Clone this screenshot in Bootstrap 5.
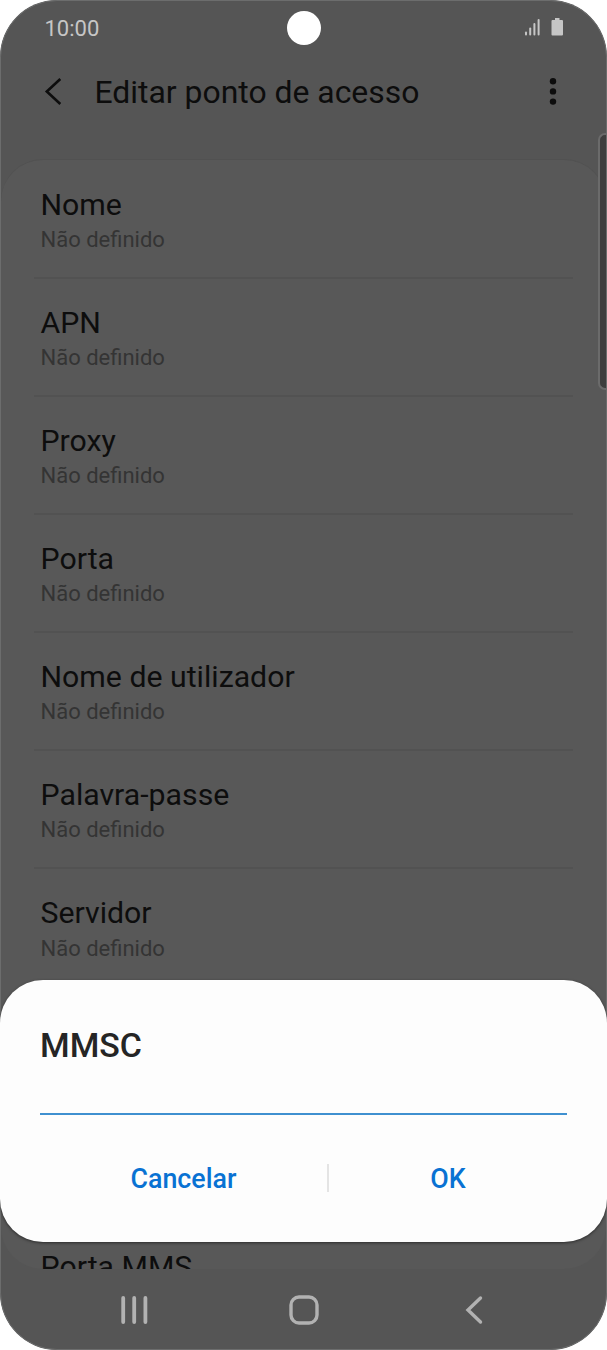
<!doctype html>
<html lang="pt">
<head>
    <meta charset="utf-8">
    <meta name="viewport" content="width=device-width, initial-scale=1">
    <title>Editar ponto de acesso</title>
    <link href="https://cdn.jsdelivr.net/npm/bootstrap@5.3.3/dist/css/bootstrap.min.css" rel="stylesheet">
    <style>
        body {
            background-color: #fff;
            font-family: Roboto, "Liberation Sans", sans-serif;
            color: #0d0d0d;
        }
        .phone {
            width: 607px;
            height: 1350px;
            padding: 1px;
            background-color: #555;
            border-radius: 57px;
        }
        /* thin bezel, drawn over the list but under the dialog */
        .bezel {
            top: 0;
            left: 0;
            width: 100%;
            height: 100%;
            border: 1px solid #6c6d6d;
            border-radius: 57px;
            pointer-events: none;
        }
        .status-bar {
            height: 54px;
            padding: 0 40px 0 43.5px;
            color: #c6c6c6;
            font-size: 22px;
            line-height: 30px;
        }
        .clock {
            padding-top: 2px;
        }
        .camera {
            top: 11px;
            left: 286.5px;
            width: 34px;
            height: 34px;
        }
        .title-bar {
            height: 104px;
            padding: 0 48px 30px 43px;
        }
        .title-bar h1 {
            font-size: 31.9px;
            line-height: 40px;
            margin-left: 31.5px;
        }
        .settings {
            height: 1110px;
            padding-top: .6px;
            background-color: #585858;
            border-top: 1px solid #515151;
            border-radius: 42px;
        }
        .setting {
            height: 118.1px;
            margin: 0 33px;
            padding: 26px 6.5px 0;
            border-bottom: 2px solid #525252;
        }
        .setting-name {
            font-size: 30.25px;
            line-height: 36px;
        }
        .setting-value {
            font-size: 22px;
            line-height: 30px;
            color: #343434;
            margin-top: 2.4px;
        }
        .setting-last {
            margin-top: 236px;
            border-bottom: 0;
        }
        .edge-handle {
            top: 133px;
            right: 0;
            width: 9px;
            height: 257px;
            background-color: #3e3e3e;
            border: 2px solid #6b6b6b;
            border-right: 0;
            border-radius: 7px 0 0 7px;
        }
        .sheet {
            top: 980px;
            left: 0;
            width: 607px;
            height: 262px;
            padding: 46px 40px 0;
            background-color: #fdfdfd;
            border-radius: 43px;
            box-shadow: 0 1px 3px rgba(0, 0, 0, .5);
        }
        .sheet h2 {
            font-size: 33.9px;
            line-height: 40px;
            font-weight: 500;
            color: #252525;
        }
        .sheet-input {
            height: 49px;
            border: 0;
            border-bottom: 2px solid #3f90d0;
            border-radius: 0;
            background: transparent;
        }
        .sheet-actions {
            height: 40px;
            margin-top: 43px;
        }
        .sheet-actions .btn {
            border: 0;
            padding: 2px 0 0;
            color: #0972d3;
            font-size: 26.8px;
            line-height: 40px;
            font-weight: 500;
        }
        .btn-cancel {
            width: 287px;
        }
        .btn-ok {
            width: 238px;
        }
        .action-rule {
            width: 2px;
            height: 28px;
            background-color: #e4e4e4;
        }
        .nav-keys {
            height: 80px;
            padding: 1px 123px 0 119px;
        }
        .key-home {
            margin-right: 6px;
        }
    </style>
</head>
<body>
    <div class="phone position-relative overflow-hidden">
        <div class="status-bar d-flex justify-content-between align-items-center">
            <span class="clock">10:00</span>
            <svg width="42" height="20" viewBox="0 0 42 20" fill="#c6c6c6">
                <rect x="1" y="13.500" width="2" height="4" rx="1"/>
                <rect x="5.200" y="9.500" width="2" height="8" rx="1"/>
                <rect x="9.400" y="5" width="2" height="12.500" rx="1"/>
                <rect x="13.600" y="1" width="2" height="16.500" rx="1"/>
                <path d="M31 0h4.500v2H38q1 0 1 1v13.500q0 1-1 1H28.500q-1 0-1-1V3q0-1 1-1H31z"/>
            </svg>
        </div>
        <div class="camera position-absolute bg-white rounded-circle"></div>

        <div class="title-bar d-flex align-items-center">
            <svg width="19" height="28" viewBox="0 0 19 28" fill="none" stroke="#0d0d0d" stroke-width="2.600">
                <path d="M16.300 1L2.800 13.500l13.500 12.500"/>
            </svg>
            <h1 class="fw-normal mb-0">Editar ponto de acesso</h1>
            <svg class="ms-auto" width="10" height="28" viewBox="0 0 10 28" fill="#0d0d0d">
                <circle cx="5" cy="3.300" r="3.200"/>
                <circle cx="5" cy="13.400" r="3.200"/>
                <circle cx="5" cy="23.600" r="3.200"/>
            </svg>
        </div>

        <div class="settings overflow-hidden">
            <div class="setting">
                <div class="setting-name">Nome</div>
                <div class="setting-value">Não definido</div>
            </div>
            <div class="setting">
                <div class="setting-name">APN</div>
                <div class="setting-value">Não definido</div>
            </div>
            <div class="setting">
                <div class="setting-name">Proxy</div>
                <div class="setting-value">Não definido</div>
            </div>
            <div class="setting">
                <div class="setting-name">Porta</div>
                <div class="setting-value">Não definido</div>
            </div>
            <div class="setting">
                <div class="setting-name">Nome de utilizador</div>
                <div class="setting-value">Não definido</div>
            </div>
            <div class="setting">
                <div class="setting-name">Palavra-passe</div>
                <div class="setting-value">Não definido</div>
            </div>
            <div class="setting">
                <div class="setting-name">Servidor</div>
                <div class="setting-value">Não definido</div>
            </div>
            <div class="setting setting-last">
                <div class="setting-name">Porta MMS</div>
            </div>
        </div>

        <div class="nav-keys d-flex justify-content-between align-items-center">
            <svg width="28" height="30" viewBox="0 0 28 30" stroke="#b2b2b2" stroke-width="3.800" stroke-linecap="round">
                <path d="M3.200 3v24M14.200 3v24M25.400 3v24"/>
            </svg>
            <svg class="key-home" width="32" height="32" viewBox="0 0 32 32" fill="none" stroke="#b2b2b2" stroke-width="3.400">
                <rect x="3" y="3" width="26" height="26" rx="8"/>
            </svg>
            <svg width="18" height="30" viewBox="0 0 18 30" fill="none" stroke="#b2b2b2" stroke-width="3.400" stroke-linecap="round">
                <path d="M15.500 3L3 15l12.500 12"/>
            </svg>
        </div>

        <div class="edge-handle position-absolute"></div>
        <div class="bezel position-absolute"></div>

        <div class="sheet position-absolute">
            <h2 class="mb-0">MMSC</h2>
            <input type="text" class="sheet-input d-block w-100" aria-label="MMSC">
            <div class="sheet-actions d-flex align-items-center">
                <button type="button" class="btn btn-cancel">Cancelar</button>
                <div class="action-rule"></div>
                <button type="button" class="btn btn-ok">OK</button>
            </div>
        </div>
    </div>
    <script src="https://cdn.jsdelivr.net/npm/bootstrap@5.3.3/dist/js/bootstrap.bundle.min.js"></script>
</body>
</html>
